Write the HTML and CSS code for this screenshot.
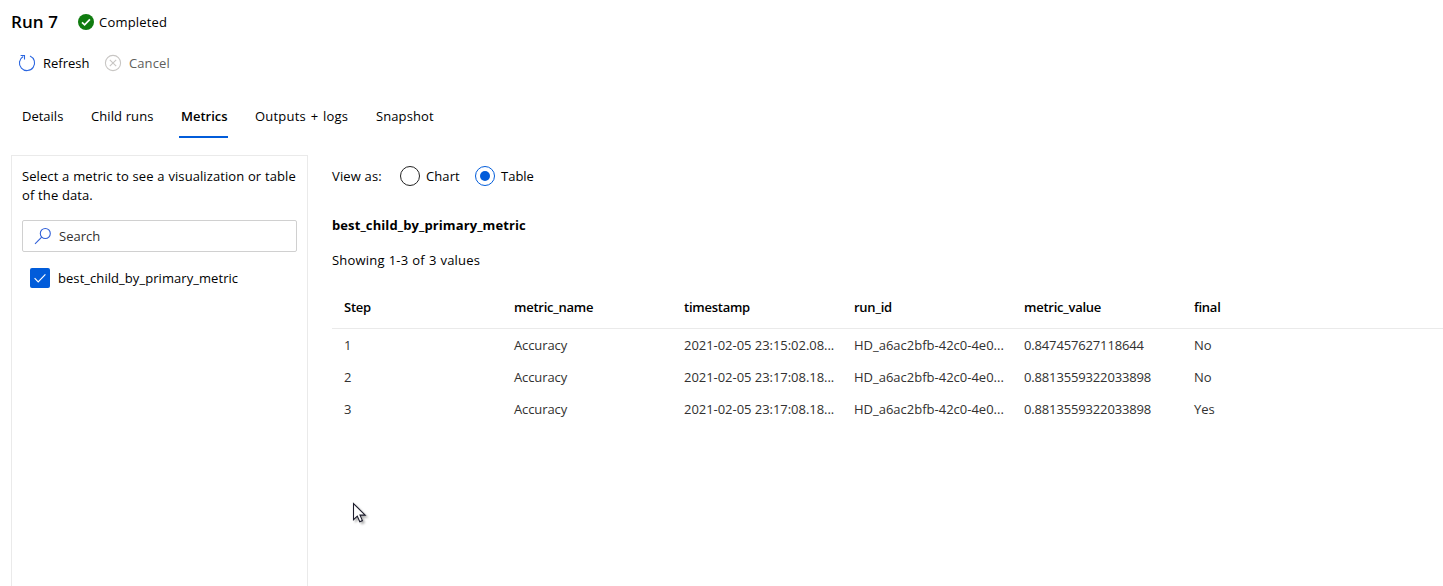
FILE: index.html
```html
<!DOCTYPE html>
<html lang="en">
<head>
<meta charset="utf-8">
<title>Run 7</title>
<link rel="stylesheet" href="styles.css">
</head>
<body>
<header class="run-header">
  <h1 class="run-title">Run 7</h1>
  <svg class="status-icon" width="16" height="16" viewBox="0 0 16 16"><circle cx="8" cy="8" r="8" fill="#107c10"/><path d="M4 8.3l2.6 2.5 5.3-5.5" fill="none" stroke="#fff" stroke-width="1.7"/></svg>
  <span class="status-text">Completed</span>
</header>
<div class="toolbar">
  <button class="command refresh"><svg width="18" height="18" viewBox="0 0 18 18" fill="none" stroke="#2b66e0" stroke-width="1.1"><path d="M12 2A7.6 7.6 0 1 1 5.2 2.4M2.6 1.5h3.9v3.9"/></svg><span>Refresh</span></button>
  <button class="command cancel" disabled><svg width="18" height="18" viewBox="0 0 18 18" fill="none" stroke="#c8c6c4" stroke-width="1.1"><circle cx="9" cy="9" r="7.6"/><path d="M5.8 5.8l6.4 6.4M12.2 5.8l-6.4 6.4"/></svg><span>Cancel</span></button>
</div>
<nav class="tabs">
  <a class="tab details">Details</a>
  <a class="tab child-runs">Child runs</a>
  <a class="tab metrics selected">Metrics</a>
  <a class="tab outputs">Outputs + logs</a>
  <a class="tab snapshot">Snapshot</a>
</nav>
<main class="content">
  <aside class="sidebar">
    <p class="hint">Select a metric to see a visualization or table<br>of the data.</p>
    <div class="search"><svg width="18" height="18" viewBox="0 0 18 18" fill="none" stroke="#3160d8" stroke-width="1.1"><circle cx="11.3" cy="6.5" r="5"/><path d="M7.7 10.1L1 16.8"/></svg><span>Search</span></div>
    <label class="metric-option"><span class="checkbox"><svg width="20" height="20" viewBox="0 0 20 20"><path d="M4.6 10.2l3.6 3.6 7.2-7.4" fill="none" stroke="#fff" stroke-width="1.2"/></svg></span><span class="metric-label">best_child_by_primary_metric</span></label>
  </aside>
  <section class="results">
    <div class="view-as">
      <span class="view-label">View as:</span>
      <span class="radio"></span><span class="radio-label chart">Chart</span>
      <span class="radio checked"></span><span class="radio-label">Table</span>
    </div>
    <h2 class="metric-title">best_child_by_primary_metric</h2>
    <p class="count">Showing 1-3 of 3 values</p>
    <div class="grid">
      <div class="row head"><span>Step</span><span>metric_name</span><span>timestamp</span><span>run_id</span><span>metric_value</span><span>final</span></div>
      <div class="row"><span>1</span><span class="name">Accuracy</span><span class="time">2021-02-05 23:15:02.08...</span><span class="id">HD_a6ac2bfb-42c0-4e0...</span><span class="value">0.847457627118644</span><span>No</span></div>
      <div class="row"><span>2</span><span class="name">Accuracy</span><span class="time">2021-02-05 23:17:08.18...</span><span class="id">HD_a6ac2bfb-42c0-4e0...</span><span class="value">0.8813559322033898</span><span>No</span></div>
      <div class="row"><span>3</span><span class="name">Accuracy</span><span class="time">2021-02-05 23:17:08.18...</span><span class="id">HD_a6ac2bfb-42c0-4e0...</span><span class="value">0.8813559322033898</span><span>Yes</span></div>
    </div>
  </section>
</main>
<svg class="cursor" width="18" height="24" viewBox="0 0 18 24"><path d="M1.5 1.5v16.2l3.8-3.6 2.5 5.6 2.6-1.1-2.4-5.5h5.2z" fill="#fff" stroke="#1c1c2c" stroke-width="1.1"/></svg>
</body>
</html>
```
FILE: styles.css
```css
* { box-sizing: border-box; }
body {
  margin: 0;
  height: 586px;
  overflow: hidden;
  display: flex;
  flex-direction: column;
  background: #fff;
  color: #000;
  font: 13px/20px "Open Sans", "Noto Sans", sans-serif;
  white-space: nowrap;
}
h1, h2, p { margin: 0; }
svg { display: block; flex: none; }
.run-header { display: flex; align-items: center; height: 44px; padding-left: 11px; }
.run-title { width: 67px; font-size: 17px; font-weight: 600; letter-spacing: .1px; }
.status-text { margin-left: 5px; letter-spacing: .2px; }
.toolbar { display: flex; height: 38px; padding-left: 18px; }
.command { display: flex; align-items: center; gap: 7px; padding: 0; border: 0; background: none; color: #000; font: inherit; }
.refresh { width: 86px; }
.cancel { color: #605e5c; letter-spacing: .1px; }
.tabs { display: flex; height: 56px; padding: 14px 0 0 20px; }
.tab { height: 42px; padding: 10px 2px 0; }
.details { width: 69px; }
.child-runs { width: 90px; letter-spacing: .1px; }
.metrics { width: 49px; margin-right: 25px; }
.outputs { width: 121px; letter-spacing: .2px; word-spacing: 1.2px; }
.snapshot { letter-spacing: .1px; }
.selected { border-bottom: 2px solid #015cda; font-weight: 600; }
.content { display: flex; flex: 1; padding: 17px 0 0 11px; }
.sidebar { width: 297px; padding: 11px 10px 0; border: 1px solid #eaeaea; border-bottom: 0; }
.hint { line-height: 19px; letter-spacing: .08px; word-spacing: .3px; }
.search { display: flex; align-items: center; gap: 7px; height: 32px; margin-top: 15px; padding-left: 11px; border: 1px solid #d0d0d0; border-radius: 2px; color: #323130; }
.metric-option { display: flex; align-items: center; gap: 8px; margin: 16px 0 0 8px; letter-spacing: .06px; }
.checkbox { width: 20px; height: 20px; border-radius: 2px; background: #015cda; }
.results { flex: 1; padding: 11px 0 0 24px; }
.view-as { display: flex; align-items: center; height: 20px; }
.view-label { width: 68px; letter-spacing: .15px; }
.radio { display: grid; place-items: center; width: 20px; height: 20px; border: 1px solid #222; border-radius: 50%; margin-right: 6px; }
.radio-label.chart { width: 49px; letter-spacing: .1px; }
.radio.checked { border-color: #015cda; }
.radio.checked::after { content: ""; width: 10px; height: 10px; border-radius: 50%; background: #015cda; }
.metric-title { margin-top: 29px; font-size: 13px; font-weight: 700; line-height: 20px; letter-spacing: .1px; }
.count { margin-top: 15px; letter-spacing: .2px; word-spacing: .4px; }
.grid { margin-top: 17px; }
.row { display: grid; grid-template-columns: repeat(6, 170px); align-items: center; height: 32px; padding-left: 12px; color: #323130; }
.head { height: 42px; padding-bottom: 2px; border-bottom: 1px solid #eaeaea; color: #000; font-weight: 600; letter-spacing: -.25px; }
.name { letter-spacing: -.1px; }
.time { letter-spacing: -.04px; }
.value { letter-spacing: -.15px; }
.cursor { position: absolute; left: 352px; top: 502px; filter: drop-shadow(2px 2px 1px rgba(0, 0, 0, .3)); }
```
